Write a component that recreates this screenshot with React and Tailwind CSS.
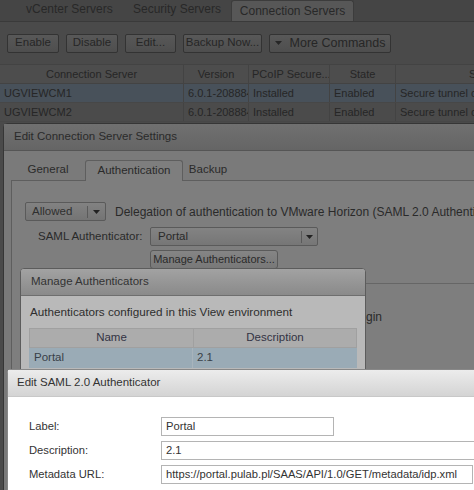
import React from "react";

const font = { fontFamily: '"Liberation Sans", Arial, sans-serif' };

function Arrow({ className = "" }) {
  return (
    <svg width="7" height="4" viewBox="0 0 7 4" className={className}>
      <path d="M0 0 H7 L3.5 4 Z" fill="currentColor" />
    </svg>
  );
}

function Layer0() {
  const btn =
    "shrink-0 h-[19px] flex items-center justify-center border border-[#333] rounded-[2px] bg-gradient-to-b from-[#585858] to-[#4e4e4e] text-[#262626]";
  const cell = "shrink-0 border-r border-[#434343] flex items-center whitespace-nowrap overflow-hidden";
  return (
    <div className="flex flex-col bg-[#4a4a4a] h-full">
      {/* tabs */}
      <div className="h-[22px] flex items-end bg-[#454545] border-b border-[#3a3a3a] text-[12px]">
        <div className="w-[26px] shrink-0" />
        <div className="w-[107px] shrink-0 pb-[6px] text-[#282828]">vCenter Servers</div>
        <div className="w-[98px] shrink-0 pb-[6px] text-[#282828]">Security Servers</div>
        <div className="w-[123px] shrink-0 h-[21px] bg-[#575757] border border-b-0 border-[#3c3c3c] rounded-t-[3px] flex items-center justify-center text-[#282828]">
          Connection Servers
        </div>
      </div>
      {/* toolbar */}
      <div className="h-[42px] flex items-center pl-[7px] gap-[7px]">
        <div className={btn + " w-[52px] text-[#3c3c3c] from-[#4f4f4f] to-[#4b4b4b] border-[#3a3a3a]"}>Enable</div>
        <div className={btn + " w-[52px]"}>Disable</div>
        <div className={btn + " w-[51px]"}>Edit...</div>
        <div className={btn + " w-[79px]"}>Backup Now...</div>
        <div className={btn + " w-[122px] gap-[8px] text-[12.5px] from-[#5a5a5a] to-[#4c4c4c]"}>
          <Arrow />
          More Commands
        </div>
      </div>
      {/* table */}
      <div className="flex flex-col text-[11px]">
        <div className="h-[20px] flex bg-[#4d4d4d] border-t border-b border-[#434343] text-[#262626]">
          <div className={cell + " w-[184px] justify-center"}>Connection Server</div>
          <div className={cell + " w-[65px] justify-center"}>Version</div>
          <div className={cell + " w-[81px] pl-[3px]"}>PCoIP Secure...</div>
          <div className={cell + " w-[66px] justify-center"}>State</div>
          <div className="flex-1 flex items-center pl-[73px] overflow-hidden">S</div>
        </div>
        {[
          ["UGVIEWCM1", "bg-[#48515a]"],
          ["UGVIEWCM2", "bg-[#4b4b4b]"],
        ].map(([n, bg]) => (
          <div key={n} className={"h-[19px] flex text-[#262626] border-b border-[#474747] " + bg}>
            <div className={cell + " w-[184px] pl-[4px]"}>{n}</div>
            <div className={cell + " w-[65px] pl-[4px]"}>6.0.1-2088848</div>
            <div className={cell + " w-[81px] pl-[4px]"}>Installed</div>
            <div className={cell + " w-[66px] pl-[4px]"}>Enabled</div>
            <div className="flex-1 flex items-center pl-[4px] overflow-hidden whitespace-nowrap">Secure tunnel connection</div>
          </div>
        ))}
      </div>
    </div>
  );
}

function Layer1() {
  return (
    <div className="absolute left-[3px] top-[123px] w-[500px] h-[400px] border border-[#363636] rounded-tl-[4px] bg-[#7a7a7a] flex flex-col">
      <div className="h-[27px] flex items-center pl-[10px] bg-gradient-to-b from-[#707070] to-[#656565] border-b border-[#555] text-[#2a2a2a]">
        Edit Connection Server Settings
      </div>
      <div className="flex items-end h-[29px] pl-[7px]">
        <div className="w-[74px] shrink-0 h-[20px] flex items-center justify-center text-[#2a2a2a]">General</div>
        <div className="w-[98px] shrink-0 h-[21px] flex items-center justify-center bg-[#7e7e7e] border border-b-0 border-[#5e5e5e] rounded-t-[3px] text-[#2a2a2a] relative top-[1px]">
          Authentication
        </div>
        <div className="w-[50px] shrink-0 h-[20px] flex items-center justify-center text-[#2a2a2a]">Backup</div>
      </div>
      <div className="ml-[7px] flex-1 border-l border-t border-[#5e5e5e] bg-[#7e7e7e] flex flex-col text-[#2a2a2a]">
        <div className="h-[21px]" />
        <div className="flex items-center pl-[13px] h-[19px] whitespace-nowrap">
          <div className="w-[81px] shrink-0 h-[19px] border border-[#5a5a5a] rounded-[2px] bg-gradient-to-b from-[#828282] to-[#747474] flex items-center">
            <div className="flex-1 pl-[6px] text-[#2f2f2f]">Allowed</div>
            <div className="w-px h-[12px] bg-[#5a5a5a]" />
            <div className="w-[17px] flex justify-center text-[#222]"><Arrow /></div>
          </div>
          <div className="pl-[9px] text-[12px]">Delegation of authentication to VMware Horizon (SAML 2.0 Authenticator)</div>
        </div>
        <div className="flex items-center h-[19px] mt-[6px] pl-[26px]">
          <div className="w-[112px] shrink-0">SAML Authenticator:</div>
          <div className="w-[168px] shrink-0 h-[19px] border border-[#5a5a5a] rounded-[2px] bg-gradient-to-b from-[#838383] to-[#767676] flex items-center">
            <div className="flex-1 pl-[7px]">Portal</div>
            <div className="w-px h-[12px] bg-[#5a5a5a]" />
            <div className="w-[15px] flex justify-center text-[#222]"><Arrow /></div>
          </div>
        </div>
        <div className="pl-[138px] mt-[4px]">
          <div className="w-[128px] h-[19px] border border-[#5a5a5a] rounded-[3px] bg-gradient-to-b from-[#858585] to-[#787878] flex items-center justify-center text-[11px]">
            Manage Authenticators...
          </div>
        </div>
        <div className="h-[14px]" />
        <div className="ml-[353px] border-t border-[#666]" />
        <div className="w-[370px] mt-[27px] text-[12px] whitespace-nowrap text-right">Use for login</div>
      </div>
    </div>
  );
}

function Layer2() {
  return (
    <div className="absolute left-[20px] top-[268px] w-[346px] h-[140px] border border-[#5c5c5c] rounded-t-[4px] bg-[#b9b9b9] flex flex-col overflow-hidden">
      <div className="h-[27px] flex items-center pl-[10px] bg-gradient-to-b from-[#a2a2a2] to-[#8a8a8a] border-b border-[#6e6e6e] text-[#333]">
        Manage Authenticators
      </div>
      <div className="h-[32px] flex items-center pl-[9px] text-[#2e2e2e] text-[11.7px]">
        Authenticators configured in this View environment
      </div>
      <div className="mx-[8px] flex flex-col">
        <div className="h-[20px] flex bg-[#acacac] border border-[#a0a0a0] text-[#334]">
          <div className="w-[164px] shrink-0 border-r border-[#a0a0a0] flex items-center justify-center">Name</div>
          <div className="flex-1 flex items-center justify-center">Description</div>
        </div>
        <div className="h-[20px] flex bg-[#9aabb6] text-[#384048]">
          <div className="w-[164px] shrink-0 border-r border-[#a8b4bc] flex items-center pl-[5px]">Portal</div>
          <div className="flex-1 flex items-center pl-[4px]">2.1</div>
        </div>
      </div>
    </div>
  );
}

function Layer3() {
  const row = "flex items-center";
  const input =
    "shrink-0 h-[19px] border border-[#b4b4b4] bg-white flex items-center pl-[4px] text-[#333] whitespace-nowrap overflow-hidden";
  return (
    <div className="absolute left-[7px] top-[369px] w-[480px] h-[140px] border border-[#888] rounded-t-[4px] bg-white flex flex-col">
      <div className="h-[27px] flex items-center pl-[9px] bg-gradient-to-b from-[#ececec] to-[#d4d4d4] border-b border-[#c8c8c8] text-[#333]">
        Edit SAML 2.0 Authenticator
      </div>
      <div className="flex flex-col gap-[5px] pt-[20px] pl-[21px] text-[#333] text-[11.2px]">
        <div className={row}>
          <div className="w-[132px] shrink-0">Label:</div>
          <div className={input + " w-[173px]"}>Portal</div>
        </div>
        <div className={row}>
          <div className="w-[132px] shrink-0">Description:</div>
          <div className={input + " w-[320px]"}>2.1</div>
        </div>
        <div className={row}>
          <div className="w-[132px] shrink-0">Metadata URL:</div>
          <div className={input + " w-[312px]"}>https://portal.pulab.pl/SAAS/API/1.0/GET/metadata/idp.xml</div>
        </div>
      </div>
    </div>
  );
}

export default function App() {
  return (
    <div className="relative w-[474px] h-[490px] overflow-hidden text-[11.5px] leading-none" style={font}>
      <Layer0 />
      <Layer1 />
      <Layer2 />
      <Layer3 />
    </div>
  );
}
